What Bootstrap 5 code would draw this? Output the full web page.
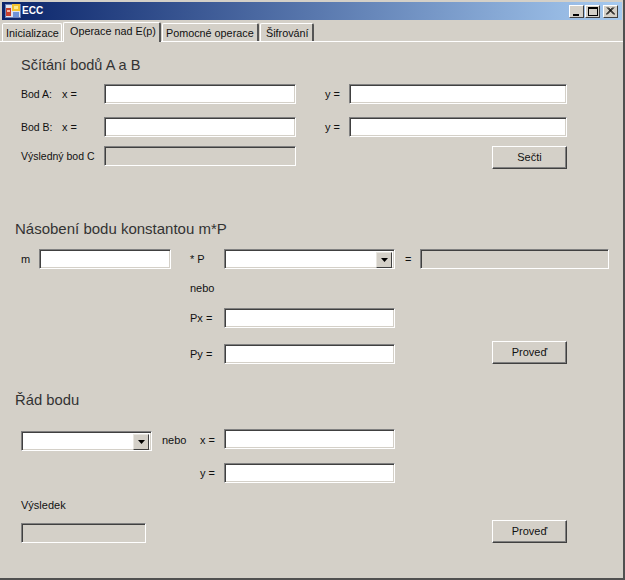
<!DOCTYPE html>
<html lang="cs">
<head>
<meta charset="utf-8">
<title>ECC</title>
<link rel="stylesheet" href="https://cdn.jsdelivr.net/npm/bootstrap@5.3.0/dist/css/bootstrap.min.css">
<style>
html,body{margin:0;height:580px;overflow:hidden;background:#d4d0c8;}
body{font-family:"Liberation Sans",Arial,sans-serif;font-size:11px;color:#111;line-height:14px;}
.win{width:625px;height:580px;border-right:2px solid #505050;border-bottom:2px solid #505050;padding-top:2px;}
.tbar{height:18px;margin:0 1px 0 2px;background:linear-gradient(90deg,#0a246a,#a6caf0);padding:0 4px 0 3px;}
.tbar-title{font-size:10px;margin-left:1px;}
.wbtn{width:15px;height:13px;background:#d4d0c8;border:1px solid;border-color:#fff #404040 #404040 #fff;display:flex;align-items:center;justify-content:center;padding:0;}
.wbtn-gap{margin-left:1px;}
.wbtn-gap2{margin-left:3px;}
.tabstrip{height:21px;padding:2px 0 0 2px;border-bottom:0;position:relative;flex-wrap:nowrap;align-items:flex-end;}
.tabline{height:1px;background:#fff;}
.tabstrip .nav-link{font-size:10.8px;line-height:14px;color:#111;background:#d4d0c8;border-radius:2px 2px 0 0;border:0;border-top:1px solid #fff;border-left:1px solid #fff;border-right:2px solid #555;height:18px;white-space:nowrap;margin:0 1px 0 0;}
.tabstrip .tab-first{width:60px;border-right:1px solid #fff;padding:2px 0 0 3px;}
.tabstrip .tab-second{width:98px;height:20px;padding:1px 0 0 6px;margin-bottom:-1px;position:relative;z-index:1;}
.tabstrip .tab-third{width:97px;padding:2px 0 0 3px;}
.tabstrip .tab-fourth{width:54px;padding:2px 0 0 5px;}
.sec-title{font-family:"Liberation Sans",Arial,sans-serif;font-size:14.8px;font-weight:400;line-height:20px;height:20px;margin:0;color:#333;}
.t1{margin:13px 0 9px 21px;font-size:14.5px;}
.t2{margin:53px 0 10px 15px;font-size:15px;}
.t3{margin:26px 0 19px 15px;}
.grid1,.grid2,.grid3{display:grid;margin-left:21px;align-items:center;}
.grid1{grid-template-columns:41px 42px 192px 29px 24px 143px 75px;grid-template-rows:20px 13px 20px 9px 20px;}
.grid2{grid-template-columns:18px 132px 19px 34px 171px 10px 15px 72px 75px 42px;grid-template-rows:20px 39px 20px 16px 20px;}
.grid3{grid-template-columns:131px 10px 38px 24px 171px 97px 75px;grid-template-rows:22px 12px 20px 14px 16px 10px 20px;}
.cs{white-space:nowrap;padding-bottom:1px;}
.r1{grid-row:1}.r2{grid-row:2}.r3{grid-row:3}.r5{grid-row:5}.r7{grid-row:7}
.c1{grid-column:1}.c2{grid-column:2}.c3{grid-column:3}.c4{grid-column:4}.c5{grid-column:5}.c7{grid-column:7}.c9{grid-column:9}
.s12{grid-column:1 / span 2}
.s67{grid-column:6 / span 2}
.s8{grid-column:8 / span 3}
.tight{font-size:10.5px;}
.form-control.wf{height:20px;min-height:20px;padding:0 3px;border-radius:0;background:#fff;border:1px solid;border-color:#808080 #fff #fff #808080;box-shadow:inset 1px 1px 0 #404040,inset -1px -1px 0 #d4d0c8;font-size:11px;width:100%;}
.form-control.wf:disabled{background:#d4d0c8;opacity:1;}
.w125{width:125px !important;}
.combo{display:flex;height:20px;background:#fff;border:1px solid;border-color:#808080 #fff #fff #808080;box-shadow:inset 1px 1px 0 #404040,inset -1px -1px 0 #d4d0c8;padding:2px;width:100%;}
.combo-field{flex:1;}
.combo-btn{width:16px;height:16px;background:#d4d0c8;border:1px solid;border-color:#e8e6e0 #404040 #404040 #e8e6e0;display:flex;align-items:center;justify-content:center;}
.btn.wb{width:75px;height:23px;padding:0;background:#d4d0c8;color:#111;border:1px solid;border-color:#fff #404040 #404040 #fff;border-radius:0;box-shadow:inset -1px -1px 0 #808080;font-size:11px;line-height:21px;}
.as{align-self:start;}.ae{align-self:end;}
</style>
</head>
<body>
<div class="win">
  <div class="tbar d-flex align-items-center">
    <svg width="16" height="16" viewBox="0 0 16 16">
      <rect x="0.5" y="1.5" width="15" height="13" fill="#dfe4ef" stroke="#6b82b8"/>
      <rect x="7" y="1" width="8" height="7" fill="#f4c430"/>
      <rect x="9" y="3" width="4" height="3" fill="#fdeb8e"/>
      <rect x="1" y="5" width="5" height="8" fill="#c8402c"/>
      <rect x="2" y="7" width="3" height="2" fill="#f2b8a8"/>
      <rect x="8" y="9" width="6" height="5" fill="#6f93d8"/>
    </svg>
    <span class="tbar-title fw-bold text-white">ECC</span>
    <span class="ms-auto wbtn"><svg width="9" height="9" viewBox="0 0 9 9"><rect x="1" y="7" width="6" height="2" fill="#000"/></svg></span>
    <span class="wbtn wbtn-gap"><svg width="10" height="9" viewBox="0 0 10 9"><rect x="0.5" y="1" width="9" height="7.5" fill="none" stroke="#000"/><rect x="0" y="0" width="10" height="2" fill="#000"/></svg></span>
    <span class="wbtn wbtn-gap2"><svg width="9" height="8" viewBox="0 0 9 8"><path d="M1 0.5L8 7.5M2.2 0.5L9 7.5M8 0.5L1 7.5M6.8 0.5L0 7.5" stroke="#000" stroke-width="1" fill="none"/></svg></span>
  </div>
  <ul class="nav tabstrip">
    <li class="nav-item"><a class="nav-link tab-first" href="#">Inicializace</a></li>
    <li class="nav-item"><a class="nav-link tab-second" href="#">Operace nad E(p)</a></li>
    <li class="nav-item"><a class="nav-link tab-third" href="#">Pomocné operace</a></li>
    <li class="nav-item"><a class="nav-link tab-fourth" href="#">Šifrování</a></li>
  </ul>
  <div class="tabline"></div>

  <h2 class="sec-title t1">Sčítání bodů A a B</h2>
  <div class="grid1">
    <span class="r1 c1 cs tight">Bod A:</span><span class="r1 c2 cs">x =</span>
    <input class="form-control wf r1 c3" type="text" aria-label="Bod A x">
    <span class="r1 c5 cs">y =</span>
    <input class="form-control wf r1 s67" type="text" aria-label="Bod A y">
    <span class="r3 c1 cs tight">Bod B:</span><span class="r3 c2 cs">x =</span>
    <input class="form-control wf r3 c3" type="text" aria-label="Bod B x">
    <span class="r3 c5 cs">y =</span>
    <input class="form-control wf r3 s67" type="text" aria-label="Bod B y">
    <span class="r5 s12 cs tight">Výsledný bod C</span>
    <input class="form-control wf r5 c3" type="text" disabled aria-label="Výsledný bod C">
    <button class="btn wb r5 c7 as" type="button">Sečti</button>
  </div>

  <h2 class="sec-title t2">Násobení bodu konstantou m*P</h2>
  <div class="grid2">
    <span class="r1 c1 cs">m</span>
    <input class="form-control wf r1 c2" type="text" aria-label="m">
    <span class="r1 c4 cs">* P</span>
    <div class="combo r1 c5"><span class="combo-field"></span><span class="combo-btn"><svg width="7" height="4" viewBox="0 0 7 4"><path d="M0 0H7L3.5 4Z" fill="#000"/></svg></span></div>
    <span class="r1 c7 cs">=</span>
    <input class="form-control wf r1 s8" type="text" disabled aria-label="Výsledek násobení">
    <span class="r2 c4 cs">nebo</span>
    <span class="r3 c4 cs">Px =</span>
    <input class="form-control wf r3 c5" type="text" aria-label="Px">
    <span class="r5 c4 cs">Py =</span>
    <input class="form-control wf r5 c5" type="text" aria-label="Py">
    <button class="btn wb r5 c9 ae" type="button">Proveď</button>
  </div>

  <h2 class="sec-title t3">Řád bodu</h2>
  <div class="grid3">
    <div class="combo r1 c1 ae"><span class="combo-field"></span><span class="combo-btn"><svg width="7" height="4" viewBox="0 0 7 4"><path d="M0 0H7L3.5 4Z" fill="#000"/></svg></span></div>
    <span class="r1 c3 cs">nebo</span>
    <span class="r1 c4 cs">x =</span>
    <input class="form-control wf r1 c5 as" type="text" aria-label="x">
    <span class="r3 c4 cs">y =</span>
    <input class="form-control wf r3 c5" type="text" aria-label="y">
    <span class="r5 c1 cs">Výsledek</span>
    <input class="form-control wf w125 r7 c1" type="text" disabled aria-label="Výsledek">
    <button class="btn wb r7 c7 ae" type="button">Proveď</button>
  </div>
</div>
<script src="https://cdn.jsdelivr.net/npm/bootstrap@5.3.0/dist/js/bootstrap.bundle.min.js"></script>
</body>
</html>
